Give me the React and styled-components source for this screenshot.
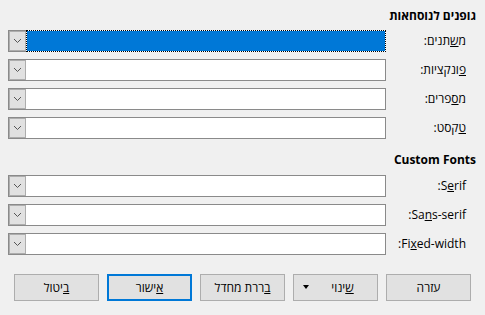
import React from "react";
import styled, { createGlobalStyle } from "styled-components";

//////////// STYLED COMPONENTS /////////////
const Global = createGlobalStyle`
  html, body {
    margin: 0;
    padding: 0;
    background: #f0f0f0;
  }
  body {
    font-family: "Open Sans", "Liberation Sans", sans-serif;
    font-size: 12px;
    color: #000;
  }
`;

const Dialog = styled.div`
  direction: rtl;
  width: 485px;
  height: 315px;
  box-sizing: border-box;
  padding: 8px 9px 0 8px;
  background: #f0f0f0;
  display: flex;
  flex-direction: column;
`;

const Section = styled.section`
  display: flex;
  flex-direction: column;
  gap: 7px;
  margin-top: ${(p) => (p.$first ? "0" : "13px")};
`;

const Heading = styled.div`
  font-weight: bold;
  line-height: 16px;
  height: 16px;
  margin-bottom: ${(p) => (p.$first ? "-1px" : "0")};
`;

const Row = styled.div`
  display: flex;
  align-items: center;
  height: 22px;
`;

const Label = styled.label`
  flex: 1;
  padding-right: 10px;
  line-height: 16px;
  white-space: nowrap;
`;

const Latin = styled.span`
  unicode-bidi: isolate;
`;

const Combo = styled.div`
  width: 378px;
  height: 22px;
  box-sizing: border-box;
  display: flex;
  flex-direction: row-reverse;
  border: 1px solid #8a8a8a;
  background: #fff;
`;

const DropButton = styled.div`
  width: 17px;
  flex: none;
  box-sizing: border-box;
  background: #e1e1e1;
  border: 1px solid #adadad;
  display: flex;
  align-items: center;
  justify-content: center;
`;

const Entry = styled.div`
  flex: 1;
  box-sizing: border-box;
  border: 1px solid transparent;
  ${(p) =>
    p.$focused &&
    `
    margin: -1px -1px -1px 0;
    border: 1px dotted #000;
    background: linear-gradient(#0078d7, #0078d7) padding-box, #fff border-box;
  `}
`;

const ButtonBar = styled.div`
  display: flex;
  justify-content: space-between;
  margin-top: 19px;
  padding: 0 5px 0 6px;
`;

const Button = styled.button`
  position: relative;
  width: 85px;
  height: 27px;
  box-sizing: border-box;
  font-family: inherit;
  font-size: 12px;
  color: #000;
  background: #e1e1e1;
  border: ${(p) => (p.$default ? "2px solid #0078d7" : "1px solid #adadad")};
  padding: 0;
  direction: rtl;
  display: flex;
  align-items: center;
  justify-content: center;
`;

const ButtonText = styled.span`
  margin-right: ${(p) => p.$shift || 0}px;
`;

const MenuArrow = styled.span`
  position: absolute;
  left: 9px;
  top: 50%;
  margin-top: -3px;
  width: 0;
  height: 0;
  border-left: 3.5px solid transparent;
  border-right: 3.5px solid transparent;
  border-top: 4px solid #000;
`;
//////////// END STYLED COMPONENTS /////////////

const Chevron = () => (
  <svg width="9" height="6" viewBox="0 0 9 6">
    <polyline points="1,1 4.5,4.5 8,1" fill="none" stroke="#555" strokeWidth="1" />
  </svg>
);

function FontRow({ label, focused }) {
  return (
    <Row>
      <Label>{label}</Label>
      <Combo>
        <DropButton>
          <Chevron />
        </DropButton>
        <Entry $focused={focused} />
      </Combo>
    </Row>
  );
}

//////////// REACT COMPONENT /////////////
export default function App() {
  return (
    <>
      <Global />
      <Dialog>
        <Section $first>
          <Heading $first>גופנים לנוסחאות</Heading>
          <FontRow focused label={<>מ<u>ש</u>תנים:</>} />
          <FontRow label={<><u>פ</u>ונקציות:</>} />
          <FontRow label={<>מ<u>ס</u>פרים:</>} />
          <FontRow label={<><u>ט</u>קסט:</>} />
        </Section>
        <Section>
          <Heading>Custom Fonts</Heading>
          <FontRow label={<><Latin>S<u>e</u>rif</Latin>:</>} />
          <FontRow label={<><Latin>Sa<u>n</u>s-serif</Latin>:</>} />
          <FontRow label={<><Latin>Fi<u>x</u>ed-width</Latin>:</>} />
        </Section>
        <ButtonBar>
          <Button>עזרה</Button>
          <Button>
            <ButtonText $shift={-14}><u>ש</u>ינוי</ButtonText>
            <MenuArrow />
          </Button>
          <Button><u>ב</u>ררת מחדל</Button>
          <Button $default><u>א</u>ישור</Button>
          <Button><u>ב</u>יטול</Button>
        </ButtonBar>
      </Dialog>
    </>
  );
}
//////////// END REACT COMPONENT /////////////
